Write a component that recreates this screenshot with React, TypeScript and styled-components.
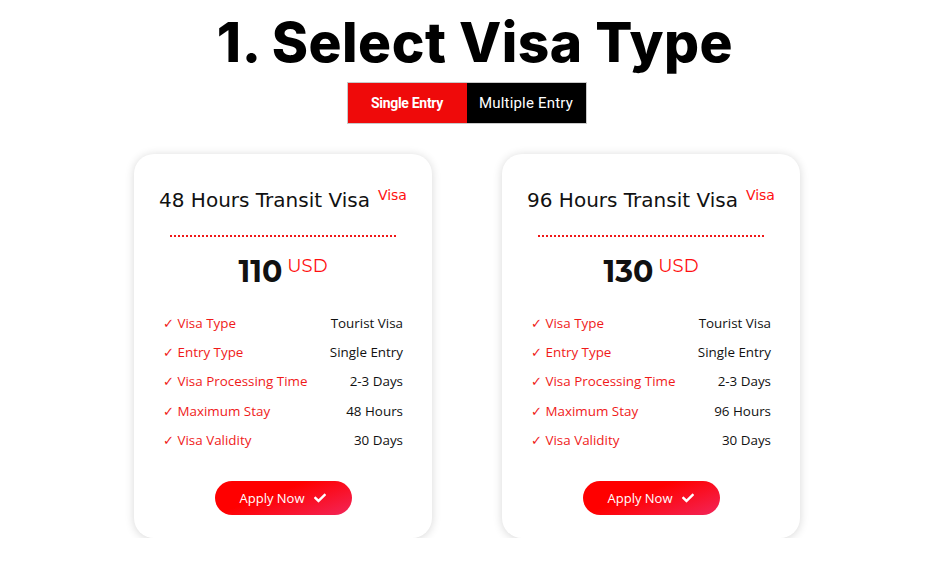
import React from "react";
import styled, { createGlobalStyle } from "styled-components";
import { FaCheck } from "react-icons/fa";

const Global = createGlobalStyle`
  html, body { margin: 0; padding: 0; background: #fff; }
  body { font-family: "Open Sans", "Liberation Sans", sans-serif; }
`;

const Page = styled.div`
  width: 938px;
  display: flex;
  flex-direction: column;
  align-items: center;
  padding-top: 8px;
`;

const Heading = styled.h1`
  margin: 0 0 0 12px;
  font-family: "Inter", "Liberation Sans", sans-serif;
  font-weight: 800;
  font-size: 55px;
  line-height: 68px;
  letter-spacing: 0.5px;
  color: #000;
`;

const Tabs = styled.div`
  display: flex;
  margin-top: 6px;
  margin-left: -5px;
  border: 1px solid #c9c9c9;
`;

const Tab = styled.button<{ $active?: boolean }>`
  width: 119px;
  height: 40px;
  border: none;
  padding: 0;
  font-family: "Roboto", "Liberation Sans", sans-serif;
  font-size: ${(p) => (p.$active ? "14px" : "15px")};
  font-weight: ${(p) => (p.$active ? 700 : 400)};
  letter-spacing: ${(p) => (p.$active ? "-0.3px" : "0.2px")};
  color: #fff;
  background: ${(p) => (p.$active ? "#ef0a0a" : "#000")};
`;

const Cards = styled.div`
  display: flex;
  gap: 70px;
  margin-top: 30px;
  margin-left: -4px;
`;

const Card = styled.div`
  width: 298px;
  height: 384px;
  box-sizing: border-box;
  background: #fff;
  border-radius: 20px;
  box-shadow: 0 1px 10px rgba(0, 0, 0, 0.16);
  display: flex;
  flex-direction: column;
  align-items: center;
  padding: 31px 29px 0;
`;

const CardTitle = styled.div`
  font-family: "DejaVu Sans", sans-serif;
  font-size: 20px;
  color: #111;
  line-height: 30px;
  white-space: nowrap;
  sup {
    color: #ff1010;
    font-size: 14px;
    vertical-align: 7px;
    line-height: 0;
    margin-left: 8px;
  }
`;

const Divider = styled.div`
  width: 226px;
  margin-top: 20px;
  border-top: 2px dotted #f01818;
`;

const Price = styled.div`
  margin-top: 17px;
  font-family: "Montserrat", "Open Sans", sans-serif;
  font-size: 30px;
  font-weight: 700;
  color: #111;
  line-height: 36px;
  sup {
    color: #ff1010;
    font-size: 18px;
    font-weight: 400;
    vertical-align: 10px;
    line-height: 0;
    margin-left: 5px;
  }
`;

const List = styled.div`
  align-self: stretch;
  margin-top: 18px;
  display: flex;
  flex-direction: column;
`;

const Row = styled.div`
  display: flex;
  justify-content: space-between;
  align-items: center;
  height: 29.4px;
  font-size: 13.4px;
`;

const Label = styled.span`
  color: #f01a1a;
`;

const Value = styled.span`
  color: #111;
`;

const ApplyButton = styled.button`
  margin-top: 26px;
  width: 137px;
  height: 34px;
  border: none;
  border-radius: 17px;
  background: linear-gradient(160deg, #ff0000 40%, #f2265a 100%);
  color: #fff;
  font-family: "Open Sans", sans-serif;
  font-size: 13px;
  display: flex;
  align-items: center;
  justify-content: center;
  gap: 10px;
  padding: 0;
`;

type Visa = { title: string; price: number; stay: string };

const visas: Visa[] = [
  { title: "48 Hours Transit Visa", price: 110, stay: "48 Hours" },
  { title: "96 Hours Transit Visa", price: 130, stay: "96 Hours" },
];

function VisaCard({ v }: { v: Visa }) {
  const rows: [string, string][] = [
    ["Visa Type", "Tourist Visa"],
    ["Entry Type", "Single Entry"],
    ["Visa Processing Time", "2-3 Days"],
    ["Maximum Stay", v.stay],
    ["Visa Validity", "30 Days"],
  ];
  return (
    <Card>
      <CardTitle>
        {v.title}
        <sup>Visa</sup>
      </CardTitle>
      <Divider />
      <Price>
        {v.price}
        <sup>USD</sup>
      </Price>
      <List>
        {rows.map(([l, val]) => (
          <Row key={l}>
            <Label>✓ {l}</Label>
            <Value>{val}</Value>
          </Row>
        ))}
      </List>
      <ApplyButton>
        Apply Now <FaCheck size={12} />
      </ApplyButton>
    </Card>
  );
}

export default function App() {
  return (
    <>
      <Global />
      <Page>
        <Heading>1. Select Visa Type</Heading>
        <Tabs>
          <Tab $active>Single Entry</Tab>
          <Tab>Multiple Entry</Tab>
        </Tabs>
        <Cards>
          {visas.map((v) => (
            <VisaCard key={v.title} v={v} />
          ))}
        </Cards>
      </Page>
    </>
  );
}
